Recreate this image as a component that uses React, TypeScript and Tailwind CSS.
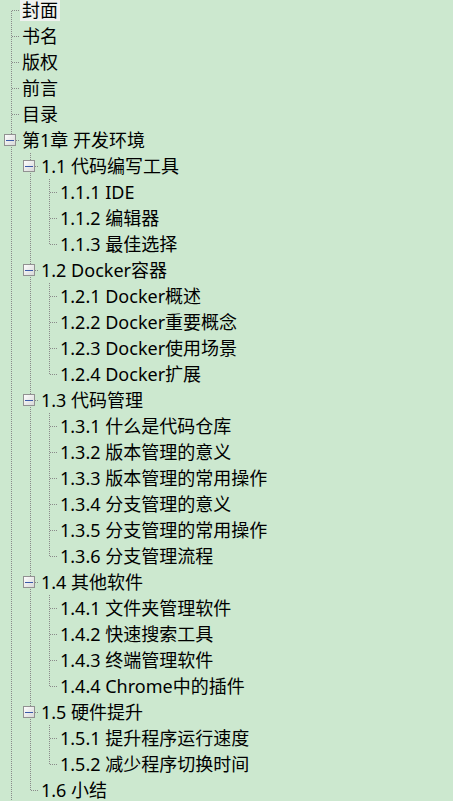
import React from "react";

type Node = { t: string; c?: Node[] };

const tree: Node[] = [
  { t: "封面" },
  { t: "书名" },
  { t: "版权" },
  { t: "前言" },
  { t: "目录" },
  {
    t: "第1章 开发环境",
    c: [
      { t: "1.1 代码编写工具", c: [{ t: "1.1.1 IDE" }, { t: "1.1.2 编辑器" }, { t: "1.1.3 最佳选择" }] },
      {
        t: "1.2 Docker容器",
        c: [{ t: "1.2.1 Docker概述" }, { t: "1.2.2 Docker重要概念" }, { t: "1.2.3 Docker使用场景" }, { t: "1.2.4 Docker扩展" }],
      },
      {
        t: "1.3 代码管理",
        c: [
          { t: "1.3.1 什么是代码仓库" },
          { t: "1.3.2 版本管理的意义" },
          { t: "1.3.3 版本管理的常用操作" },
          { t: "1.3.4 分支管理的意义" },
          { t: "1.3.5 分支管理的常用操作" },
          { t: "1.3.6 分支管理流程" },
        ],
      },
      {
        t: "1.4 其他软件",
        c: [{ t: "1.4.1 文件夹管理软件" }, { t: "1.4.2 快速搜索工具" }, { t: "1.4.3 终端管理软件" }, { t: "1.4.4 Chrome中的插件" }],
      },
      { t: "1.5 硬件提升", c: [{ t: "1.5.1 提升程序运行速度" }, { t: "1.5.2 减少程序切换时间" }] },
      { t: "1.6 小结" },
    ],
  },
];

type Row = { t: string; level: number; anc: boolean[]; hasNext: boolean; first: boolean; open: boolean };

function flatten(nodes: Node[], level: number, anc: boolean[], out: Row[]) {
  nodes.forEach((n, i) => {
    const hasNext = i < nodes.length - 1 || level === 0;
    const first = level === 0 && i === 0;
    out.push({ t: n.t, level, anc, hasNext, first, open: !!n.c });
    if (n.c) flatten(n.c, level + 1, [...anc, hasNext], out);
  });
  return out;
}

const rows = flatten(tree, 0, [], []);
const DOT = "#8a8a8a";

function Gutter({ r }: { r: Row }) {
  const w = 20 + 19 * r.level;
  const lx = 11 + 19 * r.level + 0.5;
  return (
    <svg width={w} height={26} className="shrink-0 block" shapeRendering="crispEdges">
      <defs>
        <linearGradient id="boxg" x1="0" y1="0" x2="1" y2="1">
          <stop offset="0" stopColor="#ffffff" />
          <stop offset="1" stopColor="#d6d6d6" />
        </linearGradient>
      </defs>
      {r.anc.map((a, i) =>
        a ? (
          <line key={i} x1={11 + 19 * i + 0.5} y1={0} x2={11 + 19 * i + 0.5} y2={26} stroke={DOT} strokeDasharray="1 1" />
        ) : null
      )}
      {!r.first && <line x1={lx} y1={0} x2={lx} y2={13} stroke={DOT} strokeDasharray="1 1" />}
      {r.hasNext && <line x1={lx} y1={14} x2={lx} y2={26} stroke={DOT} strokeDasharray="1 1" />}
      <line x1={lx + 0.5} y1={13.5} x2={w} y2={13.5} stroke={DOT} strokeDasharray="1 1" />
      {r.open && (
        <g>
          <rect x={4 + 19 * r.level + 0.5} y={7.5} width={11} height={11} fill="url(#boxg)" stroke="#919191" />
          <line x1={6 + 19 * r.level} y1={13.5} x2={14 + 19 * r.level} y2={13.5} stroke="#3a5aa8" />
        </g>
      )}
    </svg>
  );
}

export default function App() {
  return (
    <div
      className="w-[453px] h-[801px] overflow-hidden bg-[#cce8cf] text-black"
      style={{ fontFamily: '"Noto Sans", "Noto Sans CJK SC", sans-serif' }}
    >
      <div className="-mt-[3px] flex flex-col">
        {rows.map((r, i) => (
          <div key={i} className="flex items-center h-[26px]">
            <Gutter r={r} />
            <div
              className={
                "h-[21px] px-[2px] flex items-center text-[18px] leading-none whitespace-nowrap " +
                (i === 0 ? "bg-[#f0f2f0]" : "")
              }
            >
              {r.t}
            </div>
          </div>
        ))}
      </div>
    </div>
  );
}
